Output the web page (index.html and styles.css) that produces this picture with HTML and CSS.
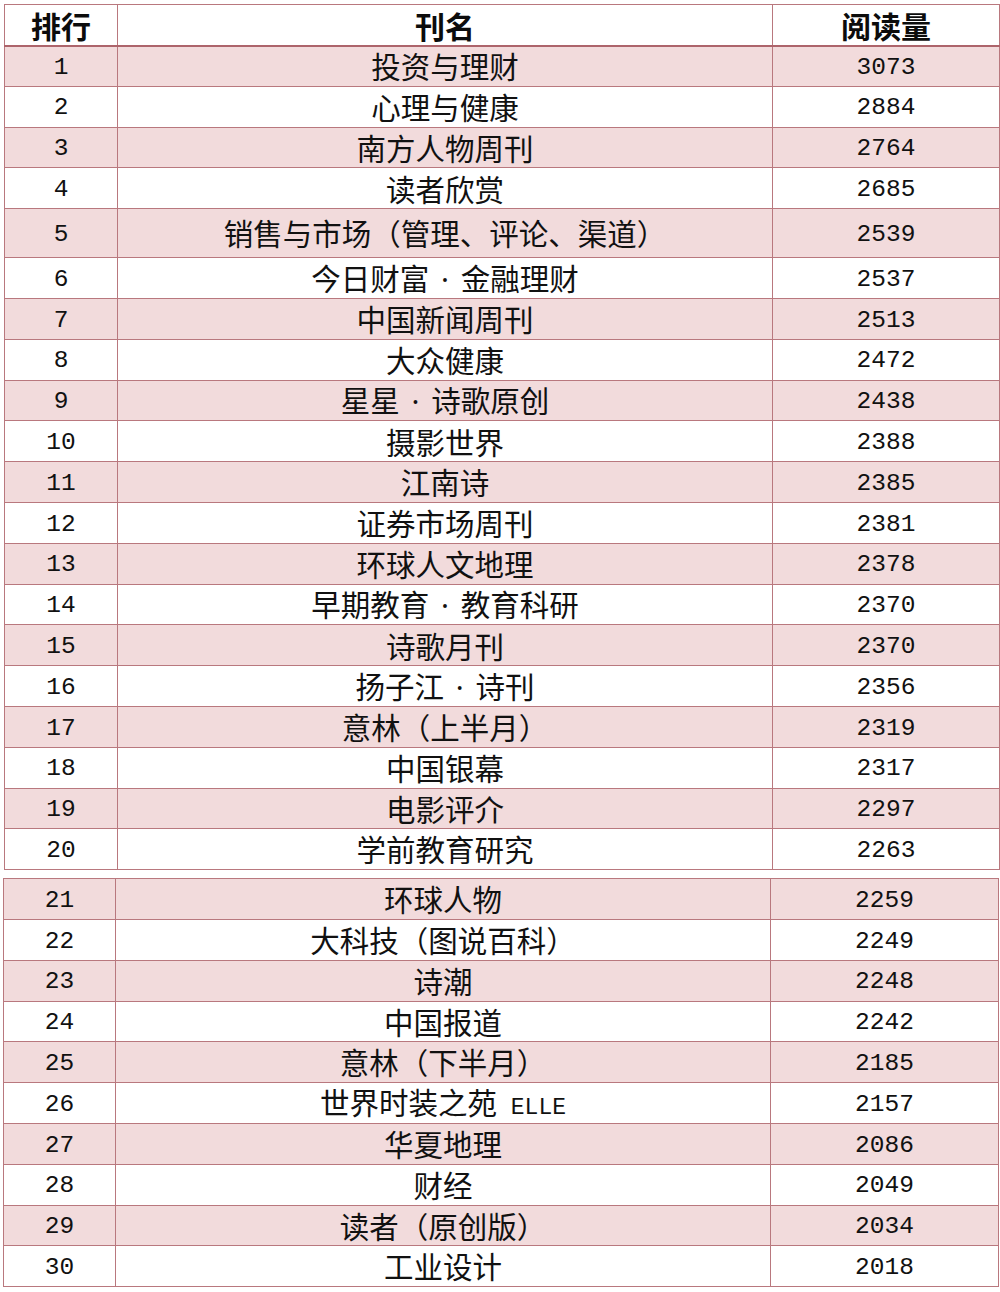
FILE: index.html
```html
<!DOCTYPE html>
<html lang="zh-CN">
<head>
<meta charset="utf-8">
<title>期刊阅读量排行</title>
<link rel="stylesheet" href="styles.css">
</head>
<body>
<div class="sheet">
<table class="rank t1">
  <colgroup><col class="c1"><col class="c2"><col class="c3"></colgroup>
  <thead>
    <tr class="head"><th>排行</th><th>刊名</th><th>阅读量</th></tr>
  </thead>
  <tbody>
    <tr class="odd"><td class="num">1</td><td class="name">投资与理财</td><td class="num">3073</td></tr>
    <tr><td class="num">2</td><td class="name">心理与健康</td><td class="num">2884</td></tr>
    <tr class="odd"><td class="num">3</td><td class="name">南方人物周刊</td><td class="num">2764</td></tr>
    <tr><td class="num">4</td><td class="name">读者欣赏</td><td class="num">2685</td></tr>
    <tr class="odd tall"><td class="num">5</td><td class="name">销售与市场（管理、评论、渠道）</td><td class="num">2539</td></tr>
    <tr><td class="num">6</td><td class="name">今日财富<span class="dot"> · </span>金融理财</td><td class="num">2537</td></tr>
    <tr class="odd"><td class="num">7</td><td class="name">中国新闻周刊</td><td class="num">2513</td></tr>
    <tr><td class="num">8</td><td class="name">大众健康</td><td class="num">2472</td></tr>
    <tr class="odd"><td class="num">9</td><td class="name">星星<span class="dot"> · </span>诗歌原创</td><td class="num">2438</td></tr>
    <tr><td class="num">10</td><td class="name">摄影世界</td><td class="num">2388</td></tr>
    <tr class="odd"><td class="num">11</td><td class="name">江南诗</td><td class="num">2385</td></tr>
    <tr><td class="num">12</td><td class="name">证券市场周刊</td><td class="num">2381</td></tr>
    <tr class="odd"><td class="num">13</td><td class="name">环球人文地理</td><td class="num">2378</td></tr>
    <tr><td class="num">14</td><td class="name">早期教育<span class="dot"> · </span>教育科研</td><td class="num">2370</td></tr>
    <tr class="odd"><td class="num">15</td><td class="name">诗歌月刊</td><td class="num">2370</td></tr>
    <tr><td class="num">16</td><td class="name">扬子江<span class="dot"> · </span>诗刊</td><td class="num">2356</td></tr>
    <tr class="odd"><td class="num">17</td><td class="name">意林（上半月）</td><td class="num">2319</td></tr>
    <tr><td class="num">18</td><td class="name">中国银幕</td><td class="num">2317</td></tr>
    <tr class="odd"><td class="num">19</td><td class="name">电影评介</td><td class="num">2297</td></tr>
    <tr><td class="num">20</td><td class="name">学前教育研究</td><td class="num">2263</td></tr>
  </tbody>
</table>
<table class="rank t2">
  <colgroup><col class="c1b"><col class="c2"><col class="c3b"></colgroup>
  <tbody>
    <tr class="odd"><td class="num">21</td><td class="name">环球人物</td><td class="num">2259</td></tr>
    <tr><td class="num">22</td><td class="name">大科技（图说百科）</td><td class="num">2249</td></tr>
    <tr class="odd"><td class="num">23</td><td class="name">诗潮</td><td class="num">2248</td></tr>
    <tr><td class="num">24</td><td class="name">中国报道</td><td class="num">2242</td></tr>
    <tr class="odd"><td class="num">25</td><td class="name">意林（下半月）</td><td class="num">2185</td></tr>
    <tr><td class="num">26</td><td class="name">世界时装之苑<span class="lat"> ELLE</span></td><td class="num">2157</td></tr>
    <tr class="odd"><td class="num">27</td><td class="name">华夏地理</td><td class="num">2086</td></tr>
    <tr><td class="num">28</td><td class="name">财经</td><td class="num">2049</td></tr>
    <tr class="odd"><td class="num">29</td><td class="name">读者（原创版）</td><td class="num">2034</td></tr>
    <tr><td class="num">30</td><td class="name">工业设计</td><td class="num">2018</td></tr>
  </tbody>
</table>
</div>
</body>
</html>
```

FILE: styles.css
```css
html, body {
  margin: 0;
  padding: 0;
  background: #ffffff;
}

.sheet {
  padding-top: 4px;
}

.rank {
  border-collapse: collapse;
  table-layout: fixed;
  border: 1px solid #a0626a;
  color: #111111;
}

.t1 {
  margin-left: 4px;
  width: 995px;
}

.t2 {
  margin-left: 3px;
  width: 995px;
  margin-top: 8px;
}

.c1 { width: 113px; }
.c2 { width: 655px; }
.c3 { width: 227px; }
.c1b { width: 112px; }
.c3b { width: 228px; }

.rank th,
.rank td {
  border: 1px solid #b9787e;
  padding: 0;
  text-align: center;
  vertical-align: middle;
  line-height: 1;
  white-space: nowrap;
}

.rank tr {
  height: 40.8px;
}

.rank tr.tall {
  height: 49px;
}

.rank tr.head {
  height: 41px;
}

.rank th {
  font-family: "Noto Sans CJK SC", sans-serif;
  font-weight: 700;
  font-size: 30px;
  color: #0c0c0c;
  background: #ffffff;
  border-bottom: 2px solid #ad646b;
}

.rank tr.odd td {
  background: #f2dbdc;
}

.num {
  font-family: "Liberation Mono", "DejaVu Sans Mono", monospace;
  font-size: 24.5px;
  padding-top: 4px !important;
}

.name {
  font-family: "Noto Sans CJK SC", sans-serif;
  font-size: 29.5px;
  font-weight: 400;
}

.dot {
  font-family: "Noto Sans", sans-serif;
  margin: 0 4px;
}

.lat {
  font-family: "Liberation Mono", monospace;
  font-size: 23px;
}
```
